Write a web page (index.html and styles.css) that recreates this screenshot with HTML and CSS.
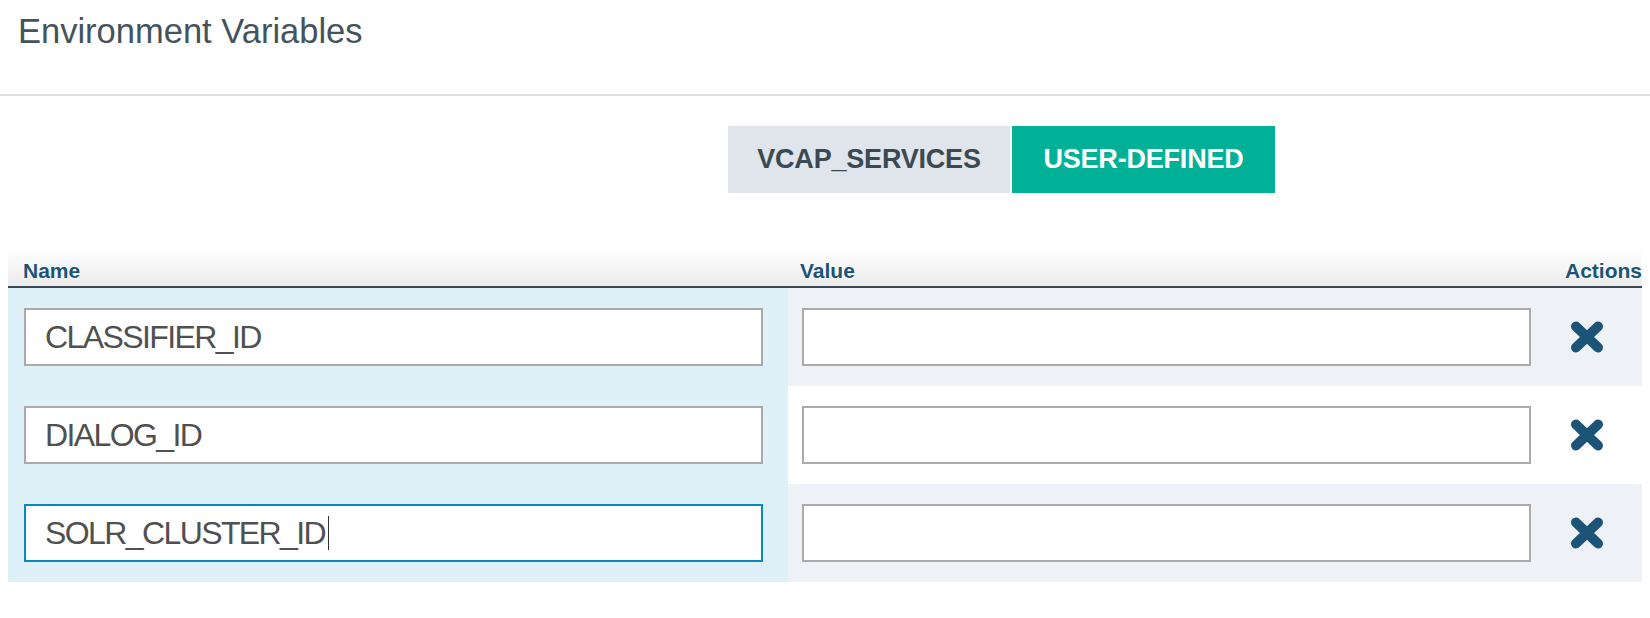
FILE: index.html
```html
<!DOCTYPE html>
<html lang="en">
<head>
<meta charset="utf-8">
<title>Environment Variables</title>
<link rel="stylesheet" href="styles.css">
</head>
<body>
<header class="page-header">
  <h1 class="title">Environment Variables</h1>
</header>
<main class="content">
  <nav class="tabs">
    <div class="tab tab-vcap">VCAP_SERVICES</div>
    <div class="tab tab-user">USER-DEFINED</div>
  </nav>
  <div class="env-table">
    <div class="thead">
      <div class="th th-name">Name</div>
      <div class="th th-value">Value</div>
      <div class="th th-actions">Actions</div>
    </div>
    <div class="row row-shaded">
      <div class="cell cell-name"><div class="field">CLASSIFIER_ID</div></div>
      <div class="cell cell-value"><div class="field"></div></div>
      <div class="cell cell-action">
        <svg class="remove" viewBox="0 0 34 32" width="34" height="32"><path d="M6 5.5 L28 26.5 M28 5.5 L6 26.5"/></svg>
      </div>
    </div>
    <div class="row">
      <div class="cell cell-name"><div class="field">DIALOG_ID</div></div>
      <div class="cell cell-value"><div class="field"></div></div>
      <div class="cell cell-action">
        <svg class="remove" viewBox="0 0 34 32" width="34" height="32"><path d="M6 5.5 L28 26.5 M28 5.5 L6 26.5"/></svg>
      </div>
    </div>
    <div class="row row-shaded">
      <div class="cell cell-name"><div class="field field-focus">SOLR_CLUSTER_ID<span class="caret"></span></div></div>
      <div class="cell cell-value"><div class="field"></div></div>
      <div class="cell cell-action">
        <svg class="remove" viewBox="0 0 34 32" width="34" height="32"><path d="M6 5.5 L28 26.5 M28 5.5 L6 26.5"/></svg>
      </div>
    </div>
  </div>
</main>
</body>
</html>
```

FILE: styles.css
```css
* { box-sizing: border-box; }

body {
  margin: 0;
  background: #ffffff;
  font-family: "Liberation Sans", Arial, Helvetica, sans-serif;
}

.page-header {
  padding: 11px 0 43px 18px;
  border-bottom: 2px solid #dde2e6;
}

.title {
  margin: 0;
  font-size: 34.5px;
  line-height: 40px;
  font-weight: normal;
  color: #44535c;
}

.content {
  padding: 0 8px;
}

.tabs {
  display: flex;
  gap: 2px;
  margin-top: 30px;
  padding-left: 720px;
}

.tab {
  height: 67px;
  display: flex;
  align-items: center;
  justify-content: center;
  font-size: 27px;
  font-weight: bold;
  letter-spacing: -0.2px;
}

.tab-vcap {
  width: 282px;
  background: #dfe5eb;
  color: #3a4952;
}

.tab-user {
  width: 263px;
  background: #00b198;
  color: #ffffff;
}

.env-table {
  margin-top: 53px;
}

.thead,
.row {
  display: grid;
  grid-template-columns: 780px 1fr 97px;
}

.thead {
  height: 42px;
  background: linear-gradient(#ffffff 5%, #ececec 100%);
  border-bottom: 2px solid #3b4a54;
}

.th {
  display: flex;
  align-items: flex-end;
  padding-bottom: 5px;
  font-size: 21px;
  line-height: 21px;
  font-weight: bold;
  color: #1c5478;
  text-shadow: 0 0 3px #ffffff;
}

.th-name { padding-left: 15px; }
.th-value { padding-left: 12px; }
.th-actions { justify-content: flex-end; }

.cell {
  padding: 20px 0;
  display: flex;
  align-items: center;
}

.cell-name {
  background: #def1f8;
  padding-left: 16px;
  padding-right: 25px;
}

.cell-value {
  padding-left: 14px;
  padding-right: 14px;
}

.row-shaded .cell-value,
.row-shaded .cell-action {
  background: #eef2f6;
}

.cell-action {
  padding-left: 25px;
}

.field {
  width: 100%;
  height: 58px;
  border: 2px solid #aaaaaa;
  background: #ffffff;
  display: flex;
  align-items: center;
  padding-left: 19px;
  font-size: 32px;
  letter-spacing: -1.6px;
  color: #505050;
  white-space: nowrap;
}

.field-focus {
  border-color: #0a89c1;
}

.caret {
  display: inline-block;
  width: 1px;
  height: 34px;
  margin-left: 3px;
  background: #333333;
}

.remove {
  display: block;
}

.remove path {
  fill: none;
  stroke: #1c5478;
  stroke-width: 10;
  stroke-linecap: round;
}
```
